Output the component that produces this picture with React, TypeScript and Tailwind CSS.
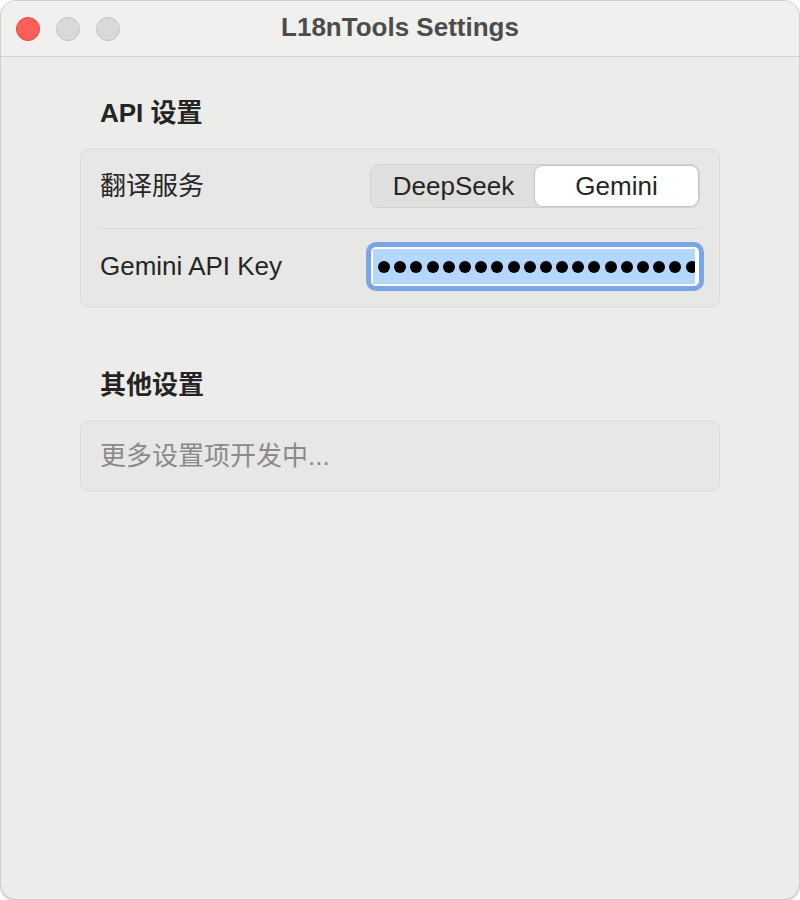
import React from "react";

const font = { fontFamily: '"Liberation Sans", "Noto Sans CJK SC", sans-serif' };

function Dots() {
  const dots = Array.from({ length: 22 });
  return (
    <div className="flex items-center gap-[4.2px] pl-[5px]">
      {dots.map((_, i) => (
        <span key={i} className="block w-[12px] h-[12px] shrink-0 rounded-full bg-black" />
      ))}
    </div>
  );
}

export default function App() {
  return (
    <div className="w-[800px] h-[900px] bg-white" style={font}>
      <div className="w-[800px] h-[900px] rounded-[16px] overflow-hidden border border-[#cfcfcf] bg-[#ececeb] flex flex-col shadow-[0_1px_2px_rgba(0,0,0,0.25)]">
        {/* Title bar */}
        <div className="relative h-[56px] shrink-0 bg-[#f0f0ef] border-b border-[#d4d4d3] flex items-center">
          <div className="flex items-center gap-[16px] pl-[15px]">
            <span className="block w-[24px] h-[24px] rounded-full bg-[#fe5f57] border border-[#e2463f]" />
            <span className="block w-[24px] h-[24px] rounded-full bg-[#d9d9d8] border border-[#c4c4c3]" />
            <span className="block w-[24px] h-[24px] rounded-full bg-[#d9d9d8] border border-[#c4c4c3]" />
          </div>
          <div className="absolute inset-0 flex items-center justify-center pointer-events-none pb-[3px]">
            <span className="text-[26px] font-bold text-[#4c4c4c] leading-none">L18nTools Settings</span>
          </div>
        </div>

        {/* Content */}
        <div className="px-[79px] pt-[40px] flex flex-col">
          <h2 className="px-[20px] text-[26px] leading-[32px] font-bold text-[#242424]">API 设置</h2>

          <div className="mt-[19px] rounded-[10px] border border-[#dcdcdb] bg-[#e7e7e6] px-[19px] pt-[15px] pb-[16px]">
            <div className="h-[44px] flex items-center justify-between">
              <span className="text-[26px] text-[#262626]">翻译服务</span>
              <div className="w-[330px] h-[44px] rounded-[9px] bg-[#dfdfde] border border-[#d3d3d2] flex items-stretch p-[1px]">
                <div className="flex-1 flex items-center justify-center text-[26px] text-[#262626]">DeepSeek</div>
                <div className="flex-1 flex items-center justify-center text-[26px] text-[#262626] bg-white rounded-[8px] shadow-[0_0_1px_1px_rgba(0,0,0,0.12)]">Gemini</div>
              </div>
            </div>
            <div className="mt-[20px] h-px bg-[#d9d9d8]" />
            <div className="mt-[13px] h-[49px] flex items-center justify-between">
              <span className="text-[26px] text-[#262626]">Gemini API Key</span>
              <div className="mr-[1px] w-[328px] h-[39px] rounded-[5px] bg-white pt-[2px] pb-[2px] pl-[2px] pr-[4px] shadow-[0_0_0_5px_#7aa6e9]">
                <div className="h-full bg-[#b3d7fe] overflow-hidden flex items-center">
                  <Dots />
                </div>
              </div>
            </div>
          </div>

          <h2 className="mt-[61px] px-[20px] text-[26px] leading-[32px] font-bold text-[#242424]">其他设置</h2>

          <div className="mt-[19px] h-[72px] rounded-[10px] border border-[#dcdcdb] bg-[#e7e7e6] px-[19px] flex items-center">
            <span className="text-[26px] text-[#8a8a8a]">更多设置项开发中...</span>
          </div>
        </div>
      </div>
    </div>
  );
}
